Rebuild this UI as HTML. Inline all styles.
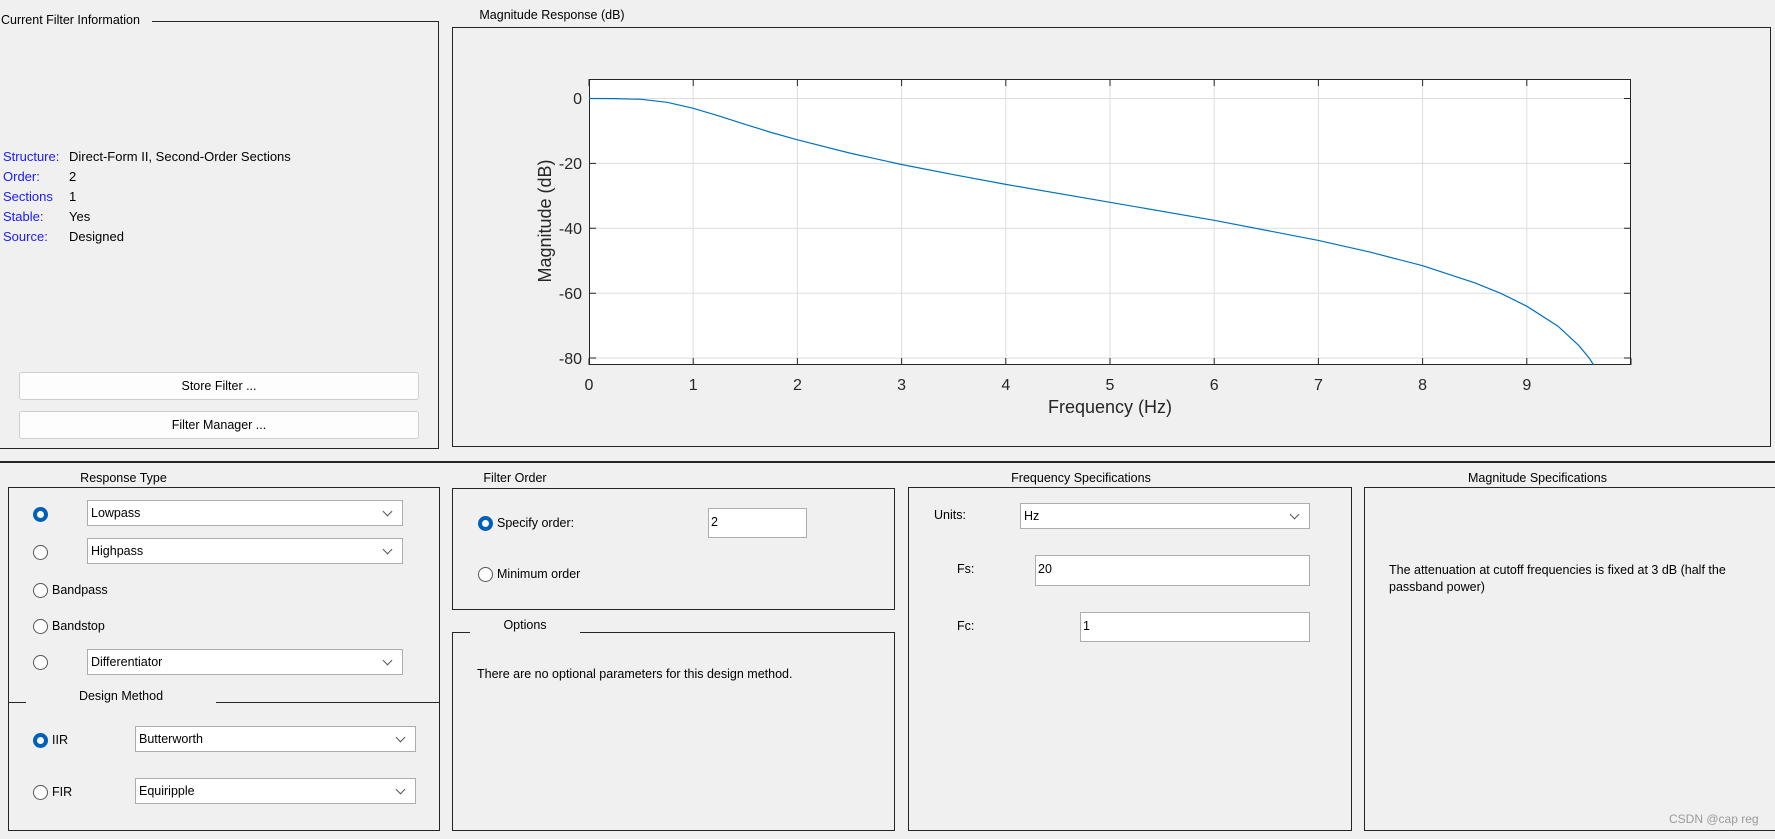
<!DOCTYPE html>
<html><head><meta charset="utf-8"><style>
*{box-sizing:border-box;margin:0;padding:0}
body{width:1775px;height:839px;background:#f0f0f0;font-family:"Liberation Sans",Arial,sans-serif;font-size:12px;color:#000;position:relative;overflow:hidden}
.a{position:absolute;white-space:nowrap}
.box{position:absolute;border:1px solid #262626}
.t{position:absolute;background:#f0f0f0;text-align:center;font-size:12.5px;line-height:16px}
.lbl{color:#1a1aff}
.inf{font-size:13px}
.dd{position:absolute;background:#fff;border:1px solid #adadad;height:26px;line-height:24px;padding-left:3px;font-size:12.5px}
.dd:after{content:"";position:absolute;right:11px;top:7px;width:6px;height:6px;border-right:1px solid #555;border-bottom:1px solid #555;transform:rotate(45deg)}
.in{position:absolute;background:#fff;border:1px solid #adadad;line-height:26px;padding-left:2px;font-size:12.5px}
.r{position:absolute;width:15px;height:15px;border-radius:50%;border:1px solid #555;background:#fff}
.r.on{border:4px solid #005fb8;background:#fff}
.btn{position:absolute;background:#fdfdfd;border:1px solid #cfcfcf;border-radius:3px;text-align:center;font-size:12.5px}
</style></head><body>

<!-- Current filter info -->
<div class="box" style="left:-2px;top:21px;width:441px;height:428px;border-left:none"></div>
<div class="t" style="left:0;top:12px;width:152px;text-align:left;padding-left:1px">Current Filter Information</div>
<div class="a lbl inf" style="left:3px;top:149px">Structure:</div><div class="a inf" style="left:69px;top:149px">Direct-Form II, Second-Order Sections</div>
<div class="a lbl inf" style="left:3px;top:169px">Order:</div><div class="a inf" style="left:69px;top:169px">2</div>
<div class="a lbl inf" style="left:3px;top:189px">Sections</div><div class="a inf" style="left:69px;top:189px">1</div>
<div class="a lbl inf" style="left:3px;top:209px">Stable:</div><div class="a inf" style="left:69px;top:209px">Yes</div>
<div class="a lbl inf" style="left:3px;top:229px">Source:</div><div class="a inf" style="left:69px;top:229px">Designed</div>
<div class="btn" style="left:19px;top:372px;width:400px;height:28px;line-height:26px">Store Filter ...</div>
<div class="btn" style="left:19px;top:411px;width:400px;height:28px;line-height:26px">Filter Manager ...</div>

<!-- Magnitude response -->
<div class="box" style="left:452px;top:27px;width:1319px;height:420px"></div>
<div class="t" style="left:474px;top:7px;width:156px">Magnitude Response (dB)</div>
<svg class="a" style="left:0;top:0" width="1775" height="460" font-family="Liberation Sans,Arial,sans-serif">
<rect x="589" y="79" width="1042" height="286" fill="#fff"/>
<g stroke="#dedede" stroke-width="1">
<line x1="693.2" y1="79" x2="693.2" y2="365"/><line x1="797.4" y1="79" x2="797.4" y2="365"/><line x1="901.6" y1="79" x2="901.6" y2="365"/><line x1="1005.8" y1="79" x2="1005.8" y2="365"/><line x1="1110" y1="79" x2="1110" y2="365"/><line x1="1214.2" y1="79" x2="1214.2" y2="365"/><line x1="1318.4" y1="79" x2="1318.4" y2="365"/><line x1="1422.6" y1="79" x2="1422.6" y2="365"/><line x1="1526.8" y1="79" x2="1526.8" y2="365"/>
<line x1="589" y1="98.5" x2="1631" y2="98.5"/><line x1="589" y1="163.4" x2="1631" y2="163.4"/><line x1="589" y1="228.3" x2="1631" y2="228.3"/><line x1="589" y1="293.2" x2="1631" y2="293.2"/><line x1="589" y1="358" x2="1631" y2="358"/>
</g>
<g stroke="#262626" stroke-width="1">
<path d="M589 365V358M693.2 365V358M797.4 365V358M901.6 365V358M1005.8 365V358M1110 365V358M1214.2 365V358M1318.4 365V358M1422.6 365V358M1526.8 365V358M1631 365V358"/>
<path d="M589 79V86M693.2 79V86M797.4 79V86M901.6 79V86M1005.8 79V86M1110 79V86M1214.2 79V86M1318.4 79V86M1422.6 79V86M1526.8 79V86"/>
<path d="M589 98.5H596M589 163.4H596M589 228.3H596M589 293.2H596M589 358H596M1631 98.5H1624M1631 163.4H1624M1631 228.3H1624M1631 293.2H1624M1631 358H1624"/>
</g>
<rect x="589.5" y="79.5" width="1041" height="285" fill="none" stroke="#262626"/>
<polyline fill="none" stroke="#0072bd" stroke-width="1.2" points="589,98.5 615,98.6 641.1,99.3 667.2,102.3 693.2,108.3 719.3,116.1 745.3,124.4 771.4,132.5 797.4,139.8 849.5,153 901.6,164.5 953.7,174.7 1005.8,184.4 1110,202.3 1214.2,220.3 1318.4,240.4 1370.5,252.2 1422.6,265.7 1474.7,282.8 1500.7,293.3 1526.8,306.2 1558,326.2 1578.9,345.6 1589.3,358.2 1593.7,365"/>
<g font-size="16" fill="#262626" text-anchor="end">
<text x="582" y="104">0</text><text x="582" y="169">-20</text><text x="582" y="234">-40</text><text x="582" y="299">-60</text><text x="582" y="364">-80</text>
</g>
<g font-size="16" fill="#262626" text-anchor="middle">
<text x="589" y="390">0</text><text x="693.2" y="390">1</text><text x="797.4" y="390">2</text><text x="901.6" y="390">3</text><text x="1005.8" y="390">4</text><text x="1110" y="390">5</text><text x="1214.2" y="390">6</text><text x="1318.4" y="390">7</text><text x="1422.6" y="390">8</text><text x="1526.8" y="390">9</text>
<text x="1110" y="413" font-size="18">Frequency (Hz)</text>
<text transform="translate(551,221) rotate(-90)" font-size="18">Magnitude (dB)</text>
</g>
</svg>

<div class="a" style="left:0;top:461px;width:1775px;height:2px;background:#262626"></div>

<!-- Response type -->
<div class="box" style="left:8px;top:487px;width:432px;height:344px"></div>
<div class="t" style="left:26px;top:470px;width:195px">Response Type</div>
<div class="a" style="left:8px;top:702px;width:432px;height:1px;background:#262626"></div>
<div class="t" style="left:26px;top:688px;width:190px">Design Method</div>
<div class="r on" style="left:33px;top:507px"></div><div class="dd" style="left:87px;top:500px;width:316px">Lowpass</div>
<div class="r" style="left:33px;top:545px"></div><div class="dd" style="left:87px;top:538px;width:316px">Highpass</div>
<div class="r" style="left:33px;top:583px"></div><div class="a" style="left:52px;top:583px;font-size:12.5px">Bandpass</div>
<div class="r" style="left:33px;top:619px"></div><div class="a" style="left:52px;top:619px;font-size:12.5px">Bandstop</div>
<div class="r" style="left:33px;top:655px"></div><div class="dd" style="left:87px;top:649px;width:316px">Differentiator</div>
<div class="r on" style="left:33px;top:733px"></div><div class="a" style="left:52px;top:733px;font-size:12.5px">IIR</div><div class="dd" style="left:135px;top:726px;width:281px">Butterworth</div>
<div class="r" style="left:33px;top:785px"></div><div class="a" style="left:52px;top:785px;font-size:12.5px">FIR</div><div class="dd" style="left:135px;top:778px;width:281px">Equiripple</div>

<!-- Filter order -->
<div class="box" style="left:452px;top:488px;width:443px;height:122px"></div>
<div class="t" style="left:462px;top:470px;width:106px">Filter Order</div>
<div class="r on" style="left:478px;top:516px"></div><div class="a" style="left:497px;top:516px;font-size:12.5px">Specify order:</div>
<div class="in" style="left:708px;top:508px;width:99px;height:30px">2</div>
<div class="r" style="left:478px;top:567px"></div><div class="a" style="left:497px;top:567px;font-size:12.5px">Minimum order</div>

<!-- Options -->
<div class="box" style="left:452px;top:632px;width:443px;height:199px"></div>
<div class="t" style="left:470px;top:617px;width:110px">Options</div>
<div class="a" style="left:477px;top:667px;font-size:12.5px">There are no optional parameters for this design method.</div>

<!-- Frequency specs -->
<div class="box" style="left:908px;top:487px;width:444px;height:344px"></div>
<div class="t" style="left:958px;top:470px;width:246px">Frequency Specifications</div>
<div class="a" style="left:934px;top:508px;font-size:12.5px">Units:</div>
<div class="dd" style="left:1020px;top:503px;width:290px">Hz</div>
<div class="a" style="left:957px;top:562px;font-size:12.5px">Fs:</div>
<div class="in" style="left:1035px;top:555px;width:275px;height:31px">20</div>
<div class="a" style="left:957px;top:619px;font-size:12.5px">Fc:</div>
<div class="in" style="left:1080px;top:612px;width:230px;height:30px">1</div>

<!-- Magnitude specs -->
<div class="box" style="left:1364px;top:487px;width:420px;height:344px"></div>
<div class="t" style="left:1389px;top:470px;width:297px">Magnitude Specifications</div>
<div class="a" style="left:1389px;top:562px;font-size:12.5px;line-height:17px">The attenuation at cutoff frequencies is fixed at 3 dB (half the<br>passband power)</div>
<div class="a" style="left:1669px;top:812px;font-size:12px;color:#9a9a9a">CSDN @cap reg</div>
</body></html>
